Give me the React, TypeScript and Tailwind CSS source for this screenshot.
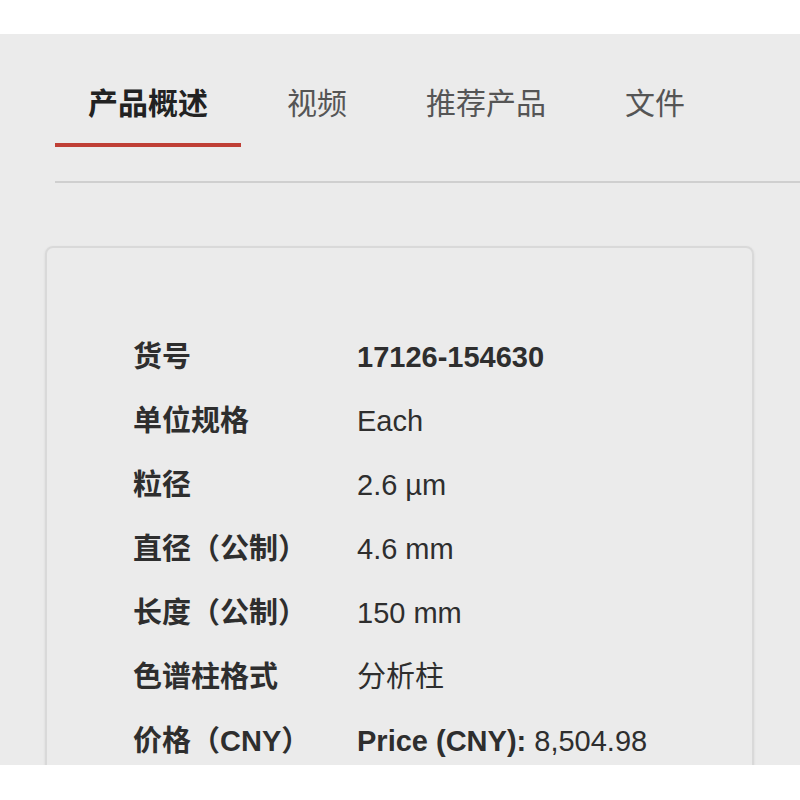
const rows: { label: string; value: React.ReactNode }[] = [
  { label: "货号", value: <span className="font-bold">17126-154630</span> },
  { label: "单位规格", value: "Each" },
  { label: "粒径", value: "2.6 µm" },
  { label: "直径（公制）", value: "4.6 mm" },
  { label: "长度（公制）", value: "150 mm" },
  { label: "色谱柱格式", value: "分析柱" },
  {
    label: "价格（CNY）",
    value: (
      <>
        <span className="font-bold">Price (CNY):</span> 8,504.98
      </>
    ),
  },
];

const tabs = ["产品概述", "视频", "推荐产品", "文件"];

function App() {
  return (
    <div
      className="w-[800px] h-[800px] overflow-hidden bg-white"
      style={{ fontFamily: '"Liberation Sans", "Noto Sans CJK SC", sans-serif' }}
    >
      <div className="mt-[34px] h-[731px] overflow-hidden bg-[#ebebeb]">
        {/* tabs */}
        <div className="ml-[55px] pt-[50px]">
          <div className="flex gap-[13px]">
            {tabs.map((t, i) => (
              <div key={t} className="flex flex-col">
                <div
                  className={
                    i === 0
                      ? "px-[33px] text-[30px] leading-[40px] font-bold text-[#222]"
                      : "px-[33px] text-[30px] leading-[40px] text-[#555]"
                  }
                >
                  {t}
                </div>
                <div className={i === 0 ? "mt-[19px] h-[4px] bg-[#bf3f35]" : "mt-[19px] h-[4px]"} />
              </div>
            ))}
          </div>
          <div className="mt-[34px] h-[2px] bg-[#cfcfcf]" />
        </div>

        {/* card */}
        <div className="ml-[45px] mt-[63px] w-[709px] h-[600px] rounded-[8px] border-2 border-[#d9d9d9] shadow-[0_1px_3px_rgba(0,0,0,0.08)] pt-[78px] pl-[86px]">
          {rows.map((r) => (
            <div key={r.label} className="flex h-[64px] items-center text-[29px] text-[#2e2e2e]">
              <div className="w-[224px] font-bold">{r.label}</div>
              <div>{r.value}</div>
            </div>
          ))}
        </div>
      </div>
    </div>
  );
}

export default App;
